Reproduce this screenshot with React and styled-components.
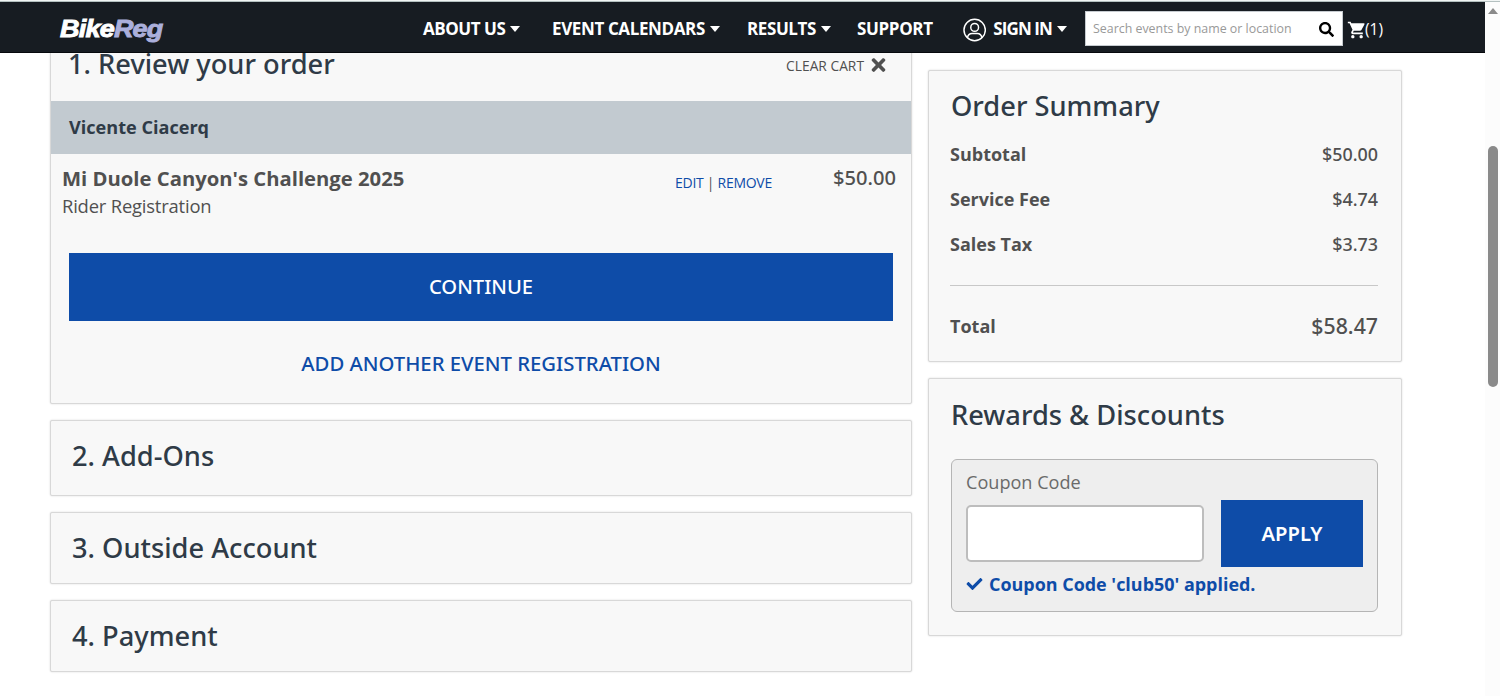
import React from 'react';
import { FaCheck, FaSearch, FaTimes } from 'react-icons/fa';
import { MdShoppingCart } from 'react-icons/md';
import styled, { createGlobalStyle } from 'styled-components';

const GlobalStyle = createGlobalStyle`
  * {
    box-sizing: border-box;
  }

  body {
    margin: 0;
    background: #fff;
    color: #505050;
    font-family: 'Open Sans', 'Noto Sans', sans-serif;
    overflow: hidden;
  }
`;

const Page = styled.div`
  display: grid;
  grid-template-columns: 1485px 15px;
  grid-template-rows: 2px 694px;
  height: 696px;
`;

const TopEdge = styled.div`
  grid-column: 1 / -1;
  background: linear-gradient(#f1f5f4 50%, #b4c0c0 50%);
`;

const Content = styled.div`
  display: flex;
  flex-direction: column;
  min-width: 0;
`;

const Header = styled.header`
  display: flex;
  align-items: center;
  flex: none;
  height: 51px;
  padding: 3px 0 0 60px;
  background: #171c22;
  border-bottom: 1px solid #06090d;
  color: #fff;
`;

const Logo = styled.div`
  width: 363px;
  font: italic bold 24px/30px 'Liberation Sans', Arial, sans-serif;
  letter-spacing: -0.7px;
  -webkit-text-stroke: 0.9px currentColor;
  transform: scaleX(1.125);
  transform-origin: left;

  span {
    color: #abafdb;
  }
`;

const Nav = styled.nav`
  display: flex;
  align-items: center;
  width: 662px;
`;

const NavItem = styled.a`
  display: flex;
  align-items: center;
  flex: none;
  width: ${({ $width }) => $width}px;
  font-size: 17px;
  font-weight: 700;
  line-height: 24px;
  letter-spacing: ${({ $spacing }) => $spacing}px;
  white-space: nowrap;
`;

const Caret = styled.span`
  margin: 1px 0 0 5px;
  border: 5px solid transparent;
  border-top: 6px solid #fff;
  border-bottom: 0;
`;

const UserIcon = styled.svg`
  width: 24px;
  height: 24px;
  margin: 2px 7px 0 1px;
  fill: none;
  stroke: #fff;
  stroke-width: 1.5;
`;

const Search = styled.div`
  display: flex;
  align-items: center;
  justify-content: space-between;
  width: 258px;
  height: 35px;
  padding: 0 8px 0 7px;
  border: 1px solid #c6cbd0;
  background: #fff;
  color: #999;
  font-size: 12.4px;

  svg {
    width: 15px;
    height: 15px;
    margin-top: 2px;
    color: #000;
  }
`;

const Cart = styled.a`
  display: flex;
  align-items: center;
  margin-left: 4px;
  font-size: 15.5px;

  svg {
    width: 20px;
    height: 20px;
    margin: 2px -2px 0 0;
  }
`;

const Main = styled.main`
  display: flex;
  align-items: flex-start;
  gap: 16px;
  flex: 1;
  min-height: 0;
  padding-left: 50px;
  overflow: hidden;
`;

const Steps = styled.section`
  display: flex;
  flex-direction: column;
  gap: 16px;
  width: 862px;
  margin-top: -20px;
`;

const Sidebar = styled.aside`
  display: flex;
  flex-direction: column;
  gap: 16px;
  width: 474px;
  padding-top: 17px;
`;

const Card = styled.div`
  height: ${({ $height }) => $height}px;
  background: #f8f8f8;
  border: 1px solid #d8d8d8;
  border-radius: 2px;
  box-shadow: 0 0 2px rgba(0, 0, 0, 0.16);
`;

const SideCard = styled(Card)`
  padding: ${({ $top }) => $top}px 23px 0 22px;
`;

const Heading = styled.h2`
  margin: 0;
  color: #2f3b47;
  font-family: 'Noto Sans', sans-serif;
  font-size: 27.25px;
  font-weight: 500;
  line-height: 36px;
`;

const StepCard = styled(Card)`
  padding: 17px 21px;
`;

const ReviewTop = styled.div`
  display: flex;
  justify-content: space-between;
  height: 67px;
  padding: 12px 24px 0 17px;
`;

const ClearCart = styled.a`
  display: flex;
  align-items: center;
  gap: 6px;
  height: 24px;
  margin-top: 7px;
  font-size: 13.8px;

  svg {
    width: 17px;
    height: 20px;
  }
`;

const RiderName = styled.div`
  height: 53px;
  padding-left: 18px;
  background: #c2cad0;
  color: #2f3b47;
  font-size: 18.1px;
  font-weight: 700;
  line-height: 53px;
`;

const Item = styled.div`
  display: grid;
  grid-template-columns: 613px 97px 1fr;
  height: 99px;
  padding: 10px 15px 0 11px;
  line-height: 28px;
`;

const ItemTitle = styled.div`
  font-size: 20.25px;
  font-weight: 700;
`;

const ItemDetail = styled.div`
  font-size: 18.4px;
  letter-spacing: -0.19px;
`;

const ItemActions = styled.div`
  padding-top: 5px;
  font-size: 14px;
  letter-spacing: -0.28px;
  white-space: nowrap;

  a {
    color: #0e4ca8;
  }
`;

const Price = styled.span`
  font-family: 'Noto Sans', sans-serif;
  font-size: ${({ $size }) => $size}px;
  font-weight: 500;
  text-align: right;
`;

const Button = styled.button`
  display: block;
  height: ${({ $height }) => $height}px;
  width: ${({ $width }) => $width}px;
  padding: 0 0 2px;
  border: 0;
  background: #0e4ca8;
  color: #fff;
  font-family: 'Noto Sans', sans-serif;
  font-size: 20.2px;
  font-weight: ${({ $weight }) => $weight};
`;

const ContinueButton = styled(Button)`
  margin-left: 18px;
`;

const AddLink = styled.a`
  display: block;
  margin-top: 28px;
  color: #0e4ca8;
  font-family: 'Noto Sans', sans-serif;
  font-size: 20.3px;
  font-weight: 500;
  line-height: 28px;
  text-align: center;
`;

const Line = styled.div`
  display: flex;
  align-items: center;
  justify-content: space-between;
  height: 45px;
  font-size: 18px;

  strong {
    font-weight: 700;
  }
`;

const Lines = styled.div`
  height: 162px;
  margin-left: -1px;
  padding-top: 7px;
  border-bottom: 1px solid #c8c8c8;
`;

const TotalLine = styled(Line)`
  margin: 17px 0 0 -1px;
`;

const CouponBox = styled.div`
  height: 153px;
  margin-top: 26px;
  padding: 9px 14px 0;
  border: 1px solid #b5b5b5;
  border-radius: 6px;
  background: #eee;
`;

const CouponLabel = styled.label`
  display: block;
  color: #6a6a6a;
  font-size: 18.1px;
  line-height: 27px;
`;

const CouponRow = styled.div`
  display: flex;
  align-items: center;
  justify-content: space-between;
  height: 67px;
  margin-top: 4px;
`;

const CouponInput = styled.input`
  width: 238px;
  height: 57px;
  border: 2px solid #bdbdbd;
  border-radius: 5px;
  background: #fff;
`;

const CouponMessage = styled.div`
  display: flex;
  align-items: center;
  gap: 6px;
  margin-top: 3px;
  color: #0e4ca8;
  font-size: 17.95px;
  font-weight: 700;
  line-height: 28px;

  svg {
    width: 17px;
    height: 16px;
  }
`;

const ScrollTrack = styled.div`
  display: flex;
  flex-direction: column;
  align-items: center;
  padding: 6px 0 0 1px;
  background: #fcfcfc;
`;

const ScrollArrow = styled.div`
  border: 5px solid transparent;
  border-bottom: 6px solid #8a8a8a;
  border-top: 0;
`;

const ScrollThumb = styled.div`
  width: 10px;
  height: 241px;
  margin-top: 132px;
  border-radius: 5px;
  background: #8a8a8a;
`;

const navItems = [
  { title: 'ABOUT US', width: 129, spacing: -0.45, caret: true },
  { title: 'EVENT CALENDARS', width: 195, spacing: -0.38, caret: true },
  { title: 'RESULTS', width: 110, spacing: -0.4, caret: true },
  { title: 'SUPPORT', width: 105, spacing: -0.35 },
];

const summaryLines = [
  { title: 'Subtotal', amount: '$50.00' },
  { title: 'Service Fee', amount: '$4.74' },
  { title: 'Sales Tax', amount: '$3.73' },
];

const SiteHeader = () => (
  <Header>
    <Logo>
      Bike<span>Reg</span>
    </Logo>
    <Nav>
      {navItems.map(({ title, width, spacing, caret }) => (
        <NavItem key={title} $width={width} $spacing={spacing}>
          {title}
          {caret && <Caret />}
        </NavItem>
      ))}
      <NavItem $width={105} $spacing={-0.9}>
        <UserIcon viewBox='0 0 24 24'>
          <circle cx='12' cy='12' r='11' />
          <circle cx='12' cy='9.3' r='4' />
          <path d='M4.6 20c.5-3.2 2.3-4.3 4.700-4.300h5.400c2.400 0 4.200 1.100 4.700 4.300' />
        </UserIcon>
        SIGN IN
        <Caret />
      </NavItem>
    </Nav>
    <Search>
      Search events by name or location
      <FaSearch />
    </Search>
    <Cart>
      <MdShoppingCart />
      (1)
    </Cart>
  </Header>
);

const ReviewOrder = () => (
  <Card $height={371}>
    <ReviewTop>
      <Heading>1. Review your order</Heading>
      <ClearCart>
        CLEAR CART
        <FaTimes />
      </ClearCart>
    </ReviewTop>
    <RiderName>Vicente Ciacerq</RiderName>
    <Item>
      <div>
        <ItemTitle>Mi Duole Canyon&apos;s Challenge 2025</ItemTitle>
        <ItemDetail>Rider Registration</ItemDetail>
      </div>
      <ItemActions>
        <a>EDIT</a> | <a>REMOVE</a>
      </ItemActions>
      <Price $size={20.1}>$50.00</Price>
    </Item>
    <ContinueButton $width={824} $height={68} $weight={500}>
      CONTINUE
    </ContinueButton>
    <AddLink>ADD ANOTHER EVENT REGISTRATION</AddLink>
  </Card>
);

const OrderSummary = () => (
  <SideCard $height={292} $top={17}>
    <Heading>Order Summary</Heading>
    <Lines>
      {summaryLines.map(({ title, amount }) => (
        <Line key={title}>
          <strong>{title}</strong>
          <Price $size={17.9}>{amount}</Price>
        </Line>
      ))}
    </Lines>
    <TotalLine>
      <strong>Total</strong>
      <Price $size={21.3}>$58.47</Price>
    </TotalLine>
  </SideCard>
);

const Rewards = () => (
  <SideCard $height={258} $top={18}>
    <Heading>Rewards &amp; Discounts</Heading>
    <CouponBox>
      <CouponLabel htmlFor='coupon'>Coupon Code</CouponLabel>
      <CouponRow>
        <CouponInput id='coupon' />
        <Button $width={142} $height={67} $weight={600}>
          APPLY
        </Button>
      </CouponRow>
      <CouponMessage>
        <FaCheck />
        Coupon Code &apos;club50&apos; applied.
      </CouponMessage>
    </CouponBox>
  </SideCard>
);

const App = () => (
  <Page>
    <GlobalStyle />
    <TopEdge />
    <Content>
      <SiteHeader />
      <Main>
        <Steps>
          <ReviewOrder />
          <StepCard $height={76}>
            <Heading>2. Add-Ons</Heading>
          </StepCard>
          <StepCard $height={72}>
            <Heading>3. Outside Account</Heading>
          </StepCard>
          <StepCard $height={72}>
            <Heading>4. Payment</Heading>
          </StepCard>
        </Steps>
        <Sidebar>
          <OrderSummary />
          <Rewards />
        </Sidebar>
      </Main>
    </Content>
    <ScrollTrack>
      <ScrollArrow />
      <ScrollThumb />
    </ScrollTrack>
  </Page>
);

export default App;
